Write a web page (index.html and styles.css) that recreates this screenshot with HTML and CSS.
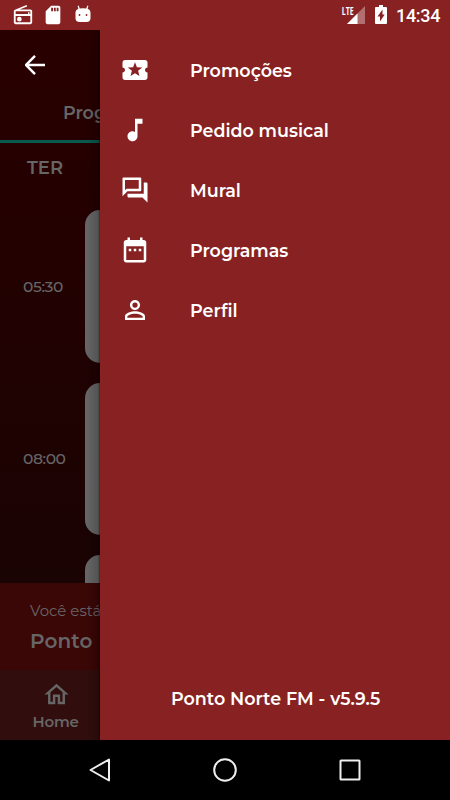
FILE: index.html
```html
<!DOCTYPE html>
<html lang="pt-BR">
<head>
<meta charset="utf-8">
<title>Ponto Norte FM</title>
<link rel="stylesheet" href="styles.css">
</head>
<body>
<div class="phone">
  <header class="status">
    <svg class="radio" viewBox="0 0 24 24"><path d="M3.24 6.15C2.51 6.43 2 7.17 2 8v12c0 1.100.89 2 2 2h16c1.110 0 2-.9 2-2V8c0-1.110-.89-2-2-2H8.300l8.260-3.340L15.880 1 3.240 6.150zM4 8h16v3h-1V9h-1.500v2H4zm0 5h16v7H4z" fill-rule="evenodd"/><circle cx="8" cy="16.500" r="2.500"/></svg>
    <svg class="sd" viewBox="0 0 24 24"><path d="M18 2h-8L4.020 8 4 20c0 1.100.9 2 2 2h12c1.100 0 2-.9 2-2V4c0-1.100-.9-2-2-2zm-6 6h-2V4h2v4zm3 0h-2V4h2v4zm3 0h-2V4h2v4z"/></svg>
    <svg class="droid" viewBox="0 0 16 18"><path fill-rule="evenodd" d="M3.600.500 4.800 3.500Q8 3 11.200 3.500L12.400.500 13.400.900 12.600 3.800Q15.500 4.800 15.500 8v5q0 4-4 4h-7q-4 0-4-4V8q0-3.200 2.900-4.200L2.600.900zM4.500 9.100a.9.900 0 1 0 0 1.800.9.900 0 0 0 0-1.800zm7 0a.9.900 0 1 0 0 1.800.9.900 0 0 0 0-1.800z"/></svg>
    <span class="space"></span>
    <span class="lte">LTE</span>
    <svg class="signal" viewBox="0 0 18 18"><path opacity=".35" d="M18 0v18H0z"/><path d="M10.500 7.500V18H0z"/></svg>
    <svg class="battery" viewBox="0 0 12 19"><path fill-rule="evenodd" d="M4 0h4v2h3q1 0 1 1v15q0 1-1 1H1q-1 0-1-1V3q0-1 1-1h3zm3.500 4.500L2.500 11.500H5V16.500L9.700 9.500H7.500z"/></svg>
    <time class="clock">14:34</time>
  </header>
  <main class="main">
    <section class="page">
      <div class="topbar"><svg viewBox="0 0 20 20"><path d="M20 10H1.500M10 .9.900 10 10 19.100"/></svg></div>
      <div class="tab">Programas</div>
      <div class="day">TER</div>
      <div class="schedule">
        <div class="slot"><time>05:30</time><div class="card"></div></div>
        <div class="slot"><time>08:00</time><div class="card"></div></div>
        <div class="slot"><time></time><div class="card"></div></div>
      </div>
      <div class="player"><div class="hint">Você está</div><div class="station">Ponto</div></div>
      <div class="home"><svg viewBox="0 0 24 24"><path d="m12 5.690 5 4.500V18h-2v-6H9v6H7v-7.810l5-4.500M12 3 2 12h3v8h6v-6h2v6h6v-8h3L12 3z"/></svg><span>Home</span></div>
    </section>
    <aside class="drawer">
      <nav>
        <a class="item"><svg viewBox="0 0 24 24"><path d="M20 12c0-1.100.9-2 2-2V6c0-1.100-.9-2-2-2H4c-1.100 0-1.990.9-1.990 2v4c1.100 0 1.990.9 1.990 2s-.89 2-2 2v4c0 1.100.9 2 2 2h16c1.100 0 2-.9 2-2v-4c-1.100 0-2-.9-2-2zm-4.420 4.800L12 14.500l-3.580 2.300 1.080-4.120-3.290-2.690 4.240-.25L12 5.800l1.540 3.950 4.240.25-3.290 2.690 1.090 4.110z"/></svg><span>Promoções</span></a>
        <a class="item"><svg viewBox="0 0 24 24"><path d="M12 3v10.550c-.59-.34-1.270-.55-2-.55-2.210 0-4 1.790-4 4s1.790 4 4 4 4-1.790 4-4V7h4V3h-6z"/></svg><span>Pedido musical</span></a>
        <a class="item"><svg viewBox="0 0 24 24"><path d="M15 4v7H5.170L4 12.170V4h11m1-2H3c-.55 0-1 .45-1 1v14l4-4h10c.55 0 1-.45 1-1V3c0-.55-.45-1-1-1zm5 4h-2v9H6v2c0 .55.45 1 1 1h11l4 4V7c0-.55-.45-1-1-1z"/></svg><span>Mural</span></a>
        <a class="item"><svg viewBox="0 0 24 24"><path d="M9 11H7v2h2v-2zm4 0h-2v2h2v-2zm4 0h-2v2h2v-2zm2-7h-1V2h-2v2H8V2H6v2H5c-1.110 0-1.990.9-1.990 2L3 20c0 1.100.89 2 2 2h14c1.100 0 2-.9 2-2V6c0-1.100-.9-2-2-2zm0 16H5V9h14v11z"/></svg><span>Programas</span></a>
        <a class="item"><svg viewBox="0 0 24 24"><path d="M12 5.900a2.100 2.100 0 1 1 0 4.200 2.100 2.100 0 0 1 0-4.200m0 9c2.970 0 6.100 1.460 6.100 2.100v1.100H5.900V17c0-.64 3.130-2.100 6.100-2.100M12 4C9.790 4 8 5.790 8 8s1.790 4 4 4 4-1.790 4-4-1.790-4-4-4zm0 9c-2.670 0-8 1.340-8 4v3h16v-3c0-2.660-5.330-4-8-4z"/></svg><span>Perfil</span></a>
      </nav>
      <footer class="version"><span>Ponto Norte FM - v5.9.5</span></footer>
    </aside>
  </main>
  <footer class="sysnav">
    <svg viewBox="0 0 26 26"><path d="M22 2.500v21L3.500 13z"/></svg>
    <svg viewBox="0 0 26 26"><circle cx="13" cy="13" r="10.800"/></svg>
    <svg viewBox="0 0 26 26"><rect x="3.500" y="3.500" width="19" height="19" rx=".5"/></svg>
  </footer>
</div>
</body>
</html>
```
FILE: styles.css
```css
* { box-sizing: border-box; }
body { margin: 0; font-family: Montserrat, Inter, sans-serif; background: #000; }
svg { display: block; flex: none; fill: currentColor; }
.phone { width: 450px; height: 800px; display: flex; flex-direction: column; overflow: hidden; }

.status { height: 30px; flex: none; display: flex; background: #882222; color: #fff; padding: 0 9px 0 11.500px; }
.radio { width: 22px; height: 22px; margin-top: 4px; }
.sd { width: 22px; height: 22px; margin: 4px 0 0 8px; }
.droid { width: 16px; height: 18px; margin: 5px 0 0 11px; }
.space { flex: 1; }
.lte { font: 700 11px/10px "Open Sans", sans-serif; transform: scaleX(.64); transform-origin: right; margin: 6px -7px 0 0; }
.signal { width: 18px; height: 18px; margin: 6px 10px 0 0; }
.battery { width: 12px; height: 19px; margin: 5px 9px 0 0; }
.clock { font: 500 18px/22px Roboto, sans-serif; width: 45px; margin-top: 5px; white-space: nowrap; letter-spacing: -.3px; }

.main { height: 710px; flex: none; display: flex; }
.page { width: 100px; overflow: hidden; display: flex; flex-direction: column; color: #666; position: relative; background: linear-gradient(#290000, #250000 20%, #1a0303 78%); }
.page::after { content: ""; position: absolute; inset: 0 0 0 auto; width: 14px; background: linear-gradient(to right, rgba(0,0,0,0), rgba(0,0,0,.18) 85%, rgba(0,0,0,.55)); }
.topbar { height: 54px; flex: none; padding: 25px 0 0 25px; color: #fff; }
.topbar svg { width: 20px; height: 20px; fill: none; stroke: currentColor; stroke-width: 2.500; }
.tab { height: 59px; flex: none; padding: 17px 0 0 63px; border-bottom: 3px solid #09594f; font-weight: 600; font-size: 17.500px; line-height: 24px; }
.day { height: 67px; flex: none; padding: 13px 0 0 27px; font-weight: 600; font-size: 18px; line-height: 24px; }
.schedule { height: 373px; flex: none; overflow: hidden; }
.slot { display: flex; align-items: center; margin-bottom: 20px; }
.slot time { width: 85px; flex: none; padding: 0 0 0 23px; font-size: 15.500px; font-weight: 500; letter-spacing: -.4px; }
.card { height: 152.500px; width: 330px; flex: none; background: #666; border-radius: 15px; }
.player { height: 87px; flex: none; background: #3b0606; padding: 17px 0 0 30px; white-space: nowrap; }
.hint { font-size: 15px; line-height: 22px; }
.station { font-size: 20px; font-weight: 600; line-height: 28px; margin-top: 5px; letter-spacing: .1px; }
.home { flex: 1; background: #320d0d; padding: 10px 0 0 32.500px; }
.home svg { width: 29px; height: 29px; margin-left: 9px; }
.home span { display: block; font-weight: 600; font-size: 15px; letter-spacing: -.2px; line-height: 20px; margin-top: 3px; }

.drawer { flex: 1; background: #882222; color: #fff; display: flex; flex-direction: column; justify-content: space-between; padding-top: 10px; }
.item { display: flex; align-items: center; height: 60px; padding-left: 20px; gap: 40px; font-size: 17.500px; font-weight: 600; white-space: nowrap; }
.item svg { width: 30px; height: 30px; }
.item span { padding-top: 1px; }
.version { height: 82px; line-height: 82px; padding-left: 71px; font-size: 17.500px; font-weight: 600; white-space: nowrap; }

.sysnav { height: 60px; flex: none; display: flex; justify-content: space-around; align-items: center; padding: 0 37px; background: #000; }
.sysnav svg { width: 26px; height: 26px; fill: none; stroke: #eee; stroke-width: 2; stroke-linejoin: round; }
```
